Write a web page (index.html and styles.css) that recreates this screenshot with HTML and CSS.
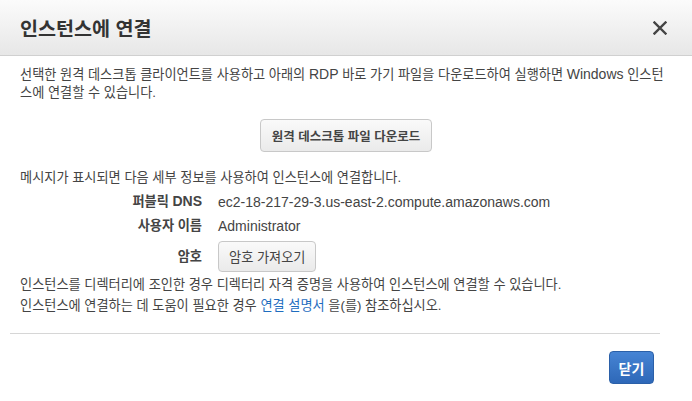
FILE: index.html
```html
<!DOCTYPE html>
<html lang="ko">
<head>
<meta charset="utf-8">
<link rel="stylesheet" href="styles.css">
</head>
<body>
<div class="modal">
  <div class="header">
    <h1 class="title">인스턴스에 연결</h1>
    <span class="close">
      <svg width="14" height="14" viewBox="0 0 14 14"><path d="M1.5 1.5 L12.5 12.5 M12.5 1.5 L1.5 12.5" stroke="#444" stroke-width="2.4" stroke-linecap="square"/></svg>
    </span>
  </div>
  <div class="body">
    <p class="intro">선택한 원격 데스크톱 클라이언트를 사용하고 아래의 <span class="en">RDP</span> 바로 가기 파일을 다운로드하여 실행하면 <span class="en">Windows</span> 인스턴스에 연결할 수 있습니다.</p>
    <div class="center">
      <button class="btn">원격 데스크톱 파일 다운로드</button>
    </div>
    <p class="msg">메시지가 표시되면 다음 세부 정보를 사용하여 인스턴스에 연결합니다.</p>
    <div class="details">
      <div class="label">퍼블릭 <span class="en">DNS</span></div>
      <div class="value en">ec2-18-217-29-3.us-east-2.compute.amazonaws.com</div>
      <div class="label">사용자 이름</div>
      <div class="value en">Administrator</div>
      <div class="label pw">암호</div>
      <div class="value"><button class="btn small">암호 가져오기</button></div>
    </div>
    <p class="note">인스턴스를 디렉터리에 조인한 경우 디렉터리 자격 증명을 사용하여 인스턴스에 연결할 수 있습니다.</p>
    <p class="note">인스턴스에 연결하는 데 도움이 필요한 경우 <a class="link" href="#">연결 설명서</a> 을(를) 참조하십시오.</p>
  </div>
  <div class="footer">
    <button class="btn-primary">닫기</button>
  </div>
</div>
</body>
</html>
```

FILE: styles.css
```css
* { box-sizing: border-box; }
html, body { margin: 0; padding: 0; background: #fff; }
body {
  font-family: "Liberation Sans", "Noto Sans CJK KR", sans-serif;
  font-size: 13.2px;
  color: #444;
  width: 692px;
  height: 401px;
  overflow: hidden;
}
.en { font-size: 14px; line-height: 1; }
.header {
  height: 56px;
  background: linear-gradient(#fbfbfb, #e7e7e7);
  border-bottom: 1px solid #d0d0d0;
  display: flex;
  align-items: center;
  justify-content: space-between;
  padding: 0 25px 0 20px;
}
.title {
  margin: 0;
  font-size: 19.6px;
  font-weight: bold;
  color: #333;
}
.close { display: flex; }
.body {
  padding: 10px 20px 0 20px;
}
.intro {
  margin: 0;
  line-height: 18px;
}
.center {
  display: flex;
  justify-content: center;
  padding: 17px 0 17px 0;
}
.btn {
  font-family: inherit;
  font-size: 12.5px;
  font-weight: bold;
  color: #444;
  background: linear-gradient(#fafafa, #eaeaea);
  border: 1px solid #c8c8c8;
  border-radius: 4px;
  height: 33px;
  padding: 0 11px;
}
.btn.small { font-size: 13.2px; font-weight: normal; height: 31px; padding: 0 10px; }
.msg {
  margin: 0;
  line-height: 18px;
}
.details {
  display: grid;
  grid-template-columns: 182px 1fr;
  column-gap: 16px;
  row-gap: 6px;
  align-items: center;
  margin-top: 6px;
}
.label {
  text-align: right;
  font-weight: bold;
  color: #444;
  line-height: 18px;
}
.value { line-height: 18px; }
.value.en { line-height: 18px; }
.note {
  margin: 0;
  line-height: 21px;
}
.details + .note { margin-top: 2px; }
.link { color: #1f6dbf; text-decoration: none; }
.footer {
  margin: 17px 32px 0 10px;
  border-top: 1px solid #d6d6d6;
  display: flex;
  justify-content: flex-end;
  padding: 17px 6px 0 0;
}
.btn-primary {
  font-family: inherit;
  font-size: 14px;
  font-weight: bold;
  color: #fff;
  background: linear-gradient(#4684d4, #2e68b8);
  border: 1px solid #2b60a8;
  border-radius: 4px;
  width: 45px;
  height: 33px;
  padding: 0;
}
```
